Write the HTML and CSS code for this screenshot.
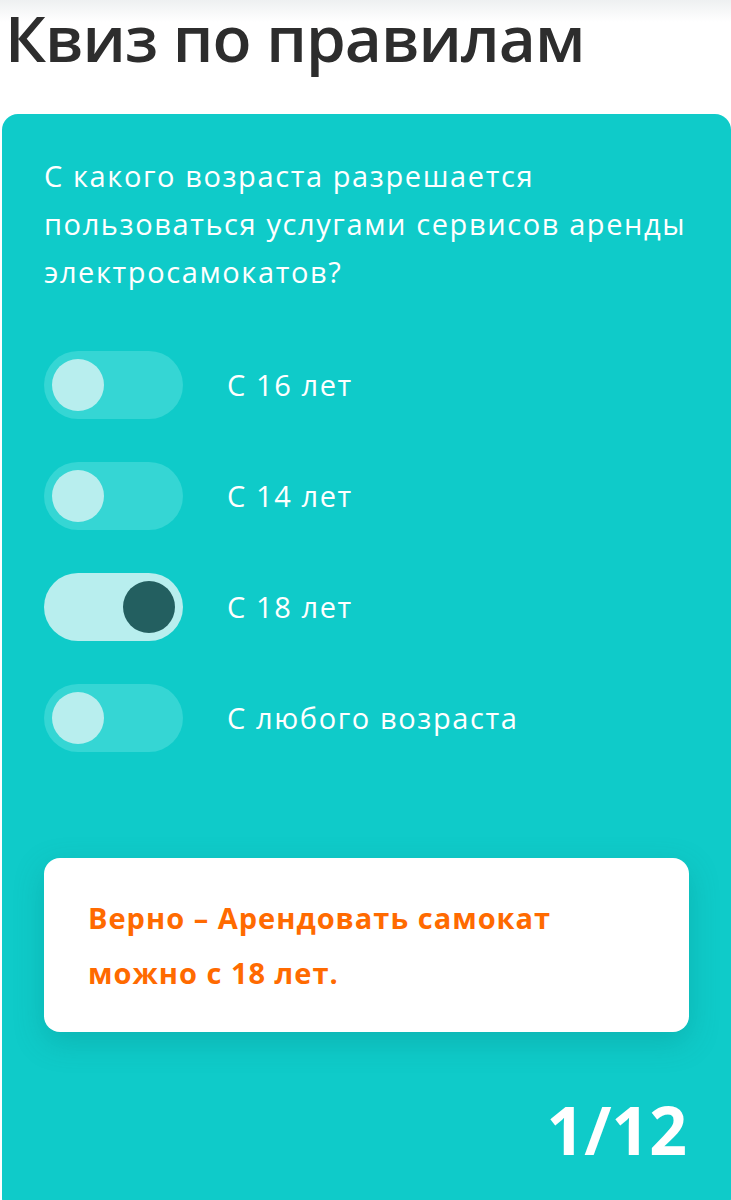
FILE: index.html
```html
<!DOCTYPE html>
<html lang="ru">
<head>
<meta charset="utf-8">
<link rel="stylesheet" href="styles.css">
</head>
<body>
<div class="topbar"></div>
<h1 class="title">Квиз по правилам</h1>
<section class="card">
  <p class="question">С какого возраста разрешается пользоваться услугами сервисов аренды электросамокатов?</p>
  <ul class="options">
    <li class="option"><span class="toggle"><span class="knob"></span></span><span class="label">С 16 лет</span></li>
    <li class="option"><span class="toggle"><span class="knob"></span></span><span class="label">С 14 лет</span></li>
    <li class="option"><span class="toggle on"><span class="knob"></span></span><span class="label">С 18 лет</span></li>
    <li class="option"><span class="toggle"><span class="knob"></span></span><span class="label">С любого возраста</span></li>
  </ul>
  <div class="result">Верно – Арендовать самокат можно с 18 лет.</div>
  <div class="counter">1/12</div>
</section>
</body>
</html>
```
FILE: styles.css
```css
html, body {
  margin: 0;
  padding: 0;
  background: #ffffff;
  font-family: "Open Sans", "Liberation Sans", sans-serif;
}
body {
  width: 731px;
  height: 1200px;
  overflow: hidden;
  position: relative;
}
.topbar {
  position: absolute;
  left: 0;
  top: 0;
  width: 100%;
  height: 22px;
  background: linear-gradient(#eef0f1, #ffffff);
}
.title {
  position: relative;
  margin: 0;
  padding: 0 0 0 5px;
  height: 110px;
  box-sizing: border-box;
  font-size: 64px;
  line-height: 76px;
  font-weight: 600;
  color: #2d2d2d;
  letter-spacing: -1px;
}
.card {
  margin: 4px 0 0 2px;
  background: #0fcbc9;
  border-radius: 16px;
  padding: 38px 42px 0 42px;
  height: 1100px;
  box-sizing: border-box;
  color: #ffffff;
}
.question {
  margin: 0;
  font-size: 29px;
  line-height: 48px;
  font-weight: 400;
  letter-spacing: 1.6px;
}
.options {
  list-style: none;
  margin: 55px 0 0 0;
  padding: 0;
  display: flex;
  flex-direction: column;
  gap: 43px;
}
.option {
  display: flex;
  align-items: center;
  gap: 44px;
}
.toggle {
  width: 139px;
  height: 68px;
  border-radius: 34px;
  background: #35d6d4;
  display: flex;
  align-items: center;
  padding: 0 8px;
  box-sizing: border-box;
}
.knob {
  width: 52px;
  height: 52px;
  border-radius: 50%;
  background: #b8eeee;
}
.toggle.on {
  background: #b8eeee;
  justify-content: flex-end;
}
.toggle.on .knob {
  background: #235f60;
}
.label {
  font-size: 29px;
  line-height: 40px;
  letter-spacing: 1.6px;
}
.result {
  margin-top: 106px;
  background: #ffffff;
  border-radius: 16px;
  padding: 32px 100px 32px 44px;
  font-size: 29px;
  line-height: 55px;
  font-weight: 700;
  letter-spacing: 1px;
  color: #ff6a00;
  box-shadow: 0 10px 30px rgba(0, 110, 110, 0.25);
}
.counter {
  margin-top: 62px;
  text-align: right;
  font-size: 66px;
  line-height: 70px;
  font-weight: 700;
  padding-right: 2px;
}
```
